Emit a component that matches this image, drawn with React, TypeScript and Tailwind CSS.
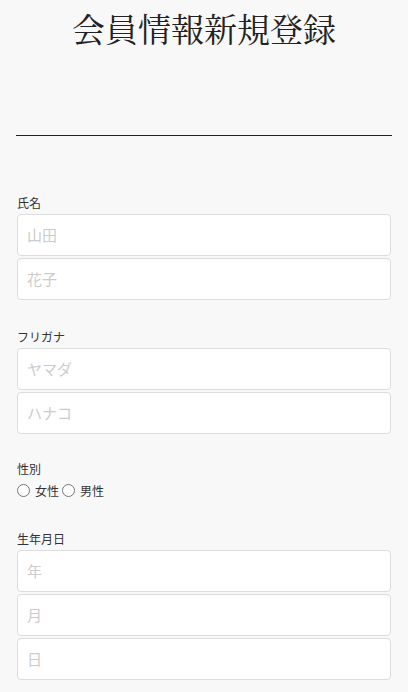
import React from "react";

const sans = "font-['Noto_Sans_CJK_JP',sans-serif]";

function Field({ placeholder }: { placeholder: string }) {
  return (
    <input
      type="text"
      placeholder={placeholder}
      className={`${sans} mx-px block h-[42px] w-[calc(100%-2px)] rounded-[4px] border border-[#dddddd] bg-white px-[9px] pb-[2px] text-[15px] text-[#333] outline-none placeholder:text-[#cccccc]`}
    />
  );
}

function Label({ children }: { children: React.ReactNode }) {
  return <p className={`${sans} mb-[3px] ml-px text-[12px] leading-[17px] text-[#333]`}>{children}</p>;
}

export default function App() {
  return (
    <div className="min-h-[692px] bg-[#f8f8f8] px-4">
      <div className="h-[136px] border-b border-[#222] pt-[6px]">
        <h1 className="text-center font-['Noto_Serif_CJK_JP',serif] text-[33px] leading-[44px] text-[#222]">
          会員情報新規登録
        </h1>
      </div>

      <form className="pt-[58px]">
        <section>
          <Label>氏名</Label>
          <div className="flex flex-col gap-[2px]">
            <Field placeholder="山田" />
            <Field placeholder="花子" />
          </div>
        </section>

        <section className="mt-[28px]">
          <Label>フリガナ</Label>
          <div className="flex flex-col gap-[2px]">
            <Field placeholder="ヤマダ" />
            <Field placeholder="ハナコ" />
          </div>
        </section>

        <section className="mt-[26px]">
          <Label>性別</Label>
          <div className={`${sans} mt-[5px] flex items-center text-[12px] leading-[17px] text-[#333]`}>
            <label className="flex items-center">
              <input type="radio" name="gender" className="m-0 ml-px mr-[5px] h-[13px] w-[13px]" />
              女性
            </label>
            <label className="ml-[3px] flex items-center">
              <input type="radio" name="gender" className="m-0 mr-[5px] h-[13px] w-[13px]" />
              男性
            </label>
          </div>
        </section>

        <section className="mt-[31px]">
          <Label>生年月日</Label>
          <div className="flex flex-col gap-[2px]">
            <Field placeholder="年" />
            <Field placeholder="月" />
            <Field placeholder="日" />
          </div>
        </section>
      </form>
    </div>
  );
}
